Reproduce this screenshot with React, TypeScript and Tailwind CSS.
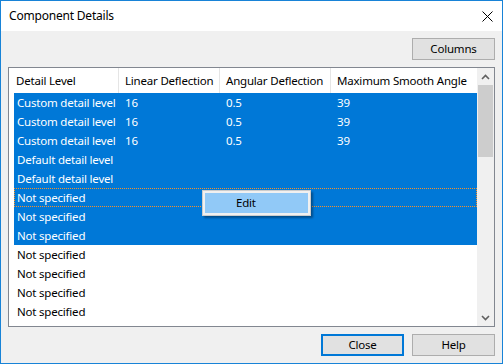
import React from "react";

const rows = [
    { level: "Custom detail level", lin: "16", ang: "0.5", max: "39", sel: true },
    { level: "Custom detail level", lin: "16", ang: "0.5", max: "39", sel: true },
    { level: "Custom detail level", lin: "16", ang: "0.5", max: "39", sel: true },
    { level: "Default detail level", lin: "", ang: "", max: "", sel: true },
    { level: "Default detail level", lin: "", ang: "", max: "", sel: true },
    { level: "Not specified", lin: "", ang: "", max: "", sel: true, focus: true },
    { level: "Not specified", lin: "", ang: "", max: "", sel: true },
    { level: "Not specified", lin: "", ang: "", max: "", sel: true },
    { level: "Not specified", lin: "", ang: "", max: "", sel: false },
    { level: "Not specified", lin: "", ang: "", max: "", sel: false },
    { level: "Not specified", lin: "", ang: "", max: "", sel: false },
    { level: "Not specified", lin: "", ang: "", max: "", sel: false },
];

function Chevron({ up }: { up?: boolean }) {
    return (
        <svg width="9" height="6" viewBox="0 0 9 6">
            <path
                d={up ? "M1 5 L4.5 1.5 L8 5" : "M1 1 L4.5 4.5 L8 1"}
                fill="none"
                stroke="#606060"
                strokeWidth="1.6"
            />
        </svg>
    );
}

function WinButton({ label, focused }: { label: string; focused?: boolean }) {
    return (
        <div
            className={
                "flex h-[22px] w-[83px] items-center justify-center bg-[#e1e1e1] text-black " +
                (focused ? "border-2 border-[#0078d7]" : "border border-[#adadad]")
            }
        >
            {label}
        </div>
    );
}

export default function App() {
    return (
        <div
            className="flex h-[364px] w-[503px] flex-col border border-[#1883d7] bg-[#f0f0f0] text-[11.5px] tracking-[-0.2px]"
            style={{ fontFamily: '"Noto Sans", "Open Sans", sans-serif' }}
        >

            {/* title bar */}
            <div className="flex h-[30px] items-center justify-between bg-white pl-[8px] pr-[9px]">
                <span className="text-[12px] text-black">Component Details</span>
                <svg width="11" height="11" viewBox="0 0 11 11">
                    <path d="M0.5 0.5 L10.5 10.5 M10.5 0.5 L0.5 10.5" stroke="#000" strokeWidth="1" />
                </svg>
            </div>

            <div className="flex flex-1 flex-col gap-[7px] px-[7px] pt-[7px] pb-[7px]">

                <div className="flex justify-end">
                    <WinButton label="Columns" />
                </div>

                {/* list view */}
                <div className="relative flex h-[260px] border border-[#828790] bg-white">

                    <div className="flex w-[468px] flex-col">
                        <div className="flex h-[25px] items-center whitespace-nowrap text-black">
                            <div className="h-full w-[110px] overflow-hidden border-r border-[#e5e5e5] pl-[7px] leading-[25px]">Detail Level</div>
                            <div className="h-full w-[101px] overflow-hidden border-r border-[#e5e5e5] pl-[6px] leading-[25px]">Linear Deflection</div>
                            <div className="h-full w-[111px] overflow-hidden border-r border-[#e5e5e5] pl-[6px] leading-[25px]">Angular Deflection</div>
                            <div className="h-full flex-1 overflow-hidden pl-[6px] leading-[25px]">Maximum Smooth Angle</div>
                        </div>

                        <div className="pl-[5px]">
                            {rows.map((r, i) => (
                                <div
                                    key={i}
                                    className={
                                        "flex h-[19px] whitespace-nowrap leading-[19px] " +
                                        (r.sel ? "bg-[#0078d7] text-white " : "text-black ") +
                                        (r.focus ? "outline-1 -outline-offset-1 outline-dotted outline-[#f7922a]" : "")
                                    }
                                >
                                    <div className="w-[105px] overflow-hidden pl-[3px]">{r.level}</div>
                                    <div className="w-[101px] pl-[6px]">{r.lin}</div>
                                    <div className="w-[111px] pl-[6px]">{r.ang}</div>
                                    <div className="flex-1 pl-[6px]">{r.max}</div>
                                </div>
                            ))}
                        </div>
                    </div>

                    {/* scrollbar */}
                    <div className="flex w-[17px] flex-col bg-[#f0f0f0]">
                        <div className="flex h-[17px] items-center justify-center">
                            <Chevron up />
                        </div>
                        <div className="mx-[1px] h-[72px] bg-[#cdcdcd]" />
                        <div className="flex-1" />
                        <div className="flex h-[17px] items-center justify-center">
                            <Chevron />
                        </div>
                    </div>

                    {/* context menu */}
                    <div className="absolute top-[122px] left-[193px] h-[26px] w-[109px] border border-[#cccccc] bg-[#f0f0f0] p-[2px] shadow-[2px_2px_2px_rgba(0,0,0,0.35)]">
                        <div className="flex h-full items-center bg-[#91c9f7] pl-[31px] text-black">Edit</div>
                    </div>
                </div>

                <div className="flex justify-end gap-[8px]">
                    <WinButton label="Close" focused />
                    <WinButton label="Help" />
                </div>
            </div>
        </div>
    );
}
